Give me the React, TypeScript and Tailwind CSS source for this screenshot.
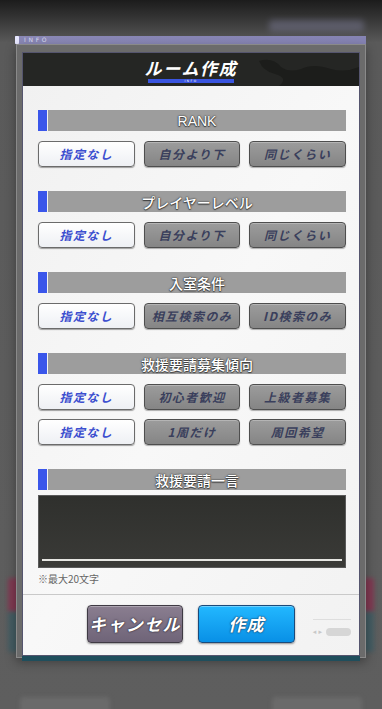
const JP = "font-['Noto_Sans_CJK_JP','Noto_Sans',sans-serif]";

type Opt = { label: string; selected?: boolean };

function OptionButton({ label, selected }: Opt) {
	return (
		<button
			type="button"
			className={
				selected
					? "flex h-[26px] items-center justify-center rounded-[4px] border border-[#6b6b6b] bg-gradient-to-b from-white to-[#eef0f4] text-[12px] font-bold italic tracking-[0.12em] text-[#3c4fcf] shadow-[0_1px_1px_rgba(0,0,0,0.35)]"
					: "flex h-[26px] items-center justify-center rounded-[4px] border border-[#4e4e4e] bg-gradient-to-b from-[#9c9c9c] to-[#858585] text-[12px] font-bold italic tracking-[0.12em] text-[#3a3f5c] shadow-[inset_0_1px_0_rgba(255,255,255,0.25),0_1px_1px_rgba(0,0,0,0.3)]"
			}
		>
			{label}
		</button>
	);
}

function SectionHeader({ title, latin }: { title: string; latin?: boolean }) {
	return (
		<div className="flex h-[21px]">
			<div className="w-[9px] bg-[#3a56ea]" />
			<div className="ml-px flex flex-1 items-center justify-center bg-[#9d9d9d]">
				<span
					className={`text-[14px] font-medium leading-none text-white [text-shadow:0_0_2px_#333,0_0_1px_#333,0_1px_1px_#444] ${latin ? "font-['Liberation_Sans',sans-serif]" : ""}`}
				>
					{title}
				</span>
			</div>
		</div>
	);
}

function OptionRow({ options }: { options: Opt[] }) {
	return (
		<div className="grid grid-cols-3 gap-x-[9px]">
			{options.map((o) => (
				<OptionButton key={o.label} {...o} />
			))}
		</div>
	);
}

export default function App() {
	return (
		<div
			className={`relative h-[709px] w-[382px] overflow-hidden bg-gradient-to-b from-[#1c1c1c] via-[#5a5a5a] via-[6%] to-[#5e5e5e] ${JP}`}
		>
			{/* blurred page behind the modal */}
			<div className="absolute right-[18px] top-[20px] h-[12px] w-[95px] rounded-[4px] bg-[#6e6e84] opacity-60 blur-[3px]" />
			<div className="absolute left-[8px] top-[578px] h-[34px] w-[14px] rounded-[3px] bg-[#8a3150] opacity-80 blur-[2px]" />
			<div className="absolute right-[8px] top-[578px] h-[34px] w-[14px] rounded-[3px] bg-[#8a3150] opacity-80 blur-[2px]" />
			<div className="absolute left-[8px] top-[612px] h-[40px] w-[14px] bg-[#3a5d66] opacity-70 blur-[2px]" />
			<div className="absolute right-[8px] top-[612px] h-[40px] w-[14px] bg-[#3a5d66] opacity-70 blur-[2px]" />
			<div className="absolute bottom-[-6px] left-[20px] h-[18px] w-[90px] rounded-[4px] bg-[#6a6a6a] blur-[2px]" />
			<div className="absolute bottom-[-6px] right-[20px] h-[18px] w-[90px] rounded-[4px] bg-[#6a6a6a] blur-[2px]" />

			<div className="relative flex flex-col pl-[15px] pr-[16px] pt-[36px]">
				{/* INFO tab bar */}
				<div className="flex h-[8px] items-center gap-[5px] bg-gradient-to-r from-[#8a88b6] to-[#8684b4]">
					<div className="h-[8px] w-[4px] rounded-[1px] bg-[#e8e8ff]" />
					<span className="font-['DejaVu_Sans',sans-serif] text-[6px] leading-none tracking-[0.45em] text-[#dcdcf0]">
						INFO
					</span>
				</div>

				{/* frame */}
				<div className="ml-px border border-[#8a8a8a] bg-[#6b6b6b] px-[5px] pb-[1px] pt-[7px] shadow-[0_4px_10px_rgba(0,0,0,0.35)]">
					<div className="flex flex-col border border-[#55556e] shadow-[0_5px_0_#1f4e5c]">
						{/* title */}
						<div className="relative flex h-[33px] flex-col items-center justify-end overflow-hidden bg-[#252624] pb-[3px]">
							<svg className="absolute right-0 top-0" width="140" height="33" viewBox="0 0 140 33">
								<path d="M40 8 q14 -4 22 6 q8 6 20 2 q12 -6 30 0 q14 4 28 -2 L140 33 L60 33 q10 -8 -4 -12 q-12 -3 -16 -13z" fill="#1c1d1b" />
							</svg>
							<span className="relative text-[17px] font-bold italic leading-none tracking-[0.1em] text-white">
								ルーム作成
							</span>
							<div className="relative mt-[3px] flex h-[4px] w-[86px] items-center justify-center bg-[#3a55e0]">
								<span className="font-['DejaVu_Sans',sans-serif] text-[3px] leading-none tracking-[0.5em] text-white">
									INFO
								</span>
							</div>
						</div>

						{/* body */}
						<div className="bg-gradient-to-br from-[#f1f1f1] via-[#f8f8f8] to-[#f2f2f2]">
							<div className="flex flex-col pl-[15px] pr-[13px] pt-[24px]">
								<SectionHeader title="RANK" latin />
								<div className="mt-[10px]">
									<OptionRow
										options={[
											{ label: "指定なし", selected: true },
											{ label: "自分より下" },
											{ label: "同じくらい" },
										]}
									/>
								</div>

								<div className="mt-[24px]">
									<SectionHeader title="プレイヤーレベル" />
								</div>
								<div className="mt-[10px]">
									<OptionRow
										options={[
											{ label: "指定なし", selected: true },
											{ label: "自分より下" },
											{ label: "同じくらい" },
										]}
									/>
								</div>

								<div className="mt-[24px]">
									<SectionHeader title="入室条件" />
								</div>
								<div className="mt-[10px]">
									<OptionRow
										options={[
											{ label: "指定なし", selected: true },
											{ label: "相互検索のみ" },
											{ label: "ID検索のみ" },
										]}
									/>
								</div>

								<div className="mt-[24px]">
									<SectionHeader title="救援要請募集傾向" />
								</div>
								<div className="mt-[10px] flex flex-col gap-[9px]">
									<OptionRow
										options={[
											{ label: "指定なし", selected: true },
											{ label: "初心者歓迎" },
											{ label: "上級者募集" },
										]}
									/>
									<OptionRow
										options={[
											{ label: "指定なし", selected: true },
											{ label: "1周だけ" },
											{ label: "周回希望" },
										]}
									/>
								</div>

								<div className="mt-[24px]">
									<SectionHeader title="救援要請一言" />
								</div>
								<div className="mt-[5px] flex h-[73px] flex-col justify-end border border-[#5a5a5a] bg-gradient-to-b from-[#2f302d] to-[#3a3a37] px-[3px] pb-[6px]">
									<div className="h-[2px] bg-[#e6e6e2]" />
								</div>
								<p className="mt-[4px] text-[10px] leading-[14px] text-[#666]">※最大20文字</p>
							</div>

							{/* footer */}
							<div className="relative mt-[8px] flex h-[61px] items-start justify-center gap-[15px] border-t border-[#c9c9c9] pt-[10px]">
								<button
									type="button"
									className="h-[38px] w-[96px] rounded-[4px] border border-[#3f3a44] bg-gradient-to-b from-[#8a7e90] to-[#6f6478] text-[17px] font-bold italic tracking-[0.08em] text-white shadow-[inset_0_1px_0_rgba(255,255,255,0.3),0_1px_2px_rgba(0,0,0,0.4)] [text-shadow:0_0_2px_#2a2530,0_0_1px_#2a2530]"
								>
									キャンセル
								</button>
								<button
									type="button"
									className="h-[38px] w-[97px] rounded-[4px] border border-[#1b4a7a] bg-gradient-to-b from-[#22b8ff] to-[#0890e6] text-[17px] font-bold italic tracking-[0.08em] text-white shadow-[inset_0_1px_0_rgba(255,255,255,0.35),0_1px_2px_rgba(0,0,0,0.4)] [text-shadow:0_0_2px_#14365a,0_0_1px_#14365a]"
								>
									作成
								</button>
								<div className="absolute right-[8px] top-[24px] h-px w-[38px] bg-[#dedede]" />
								<div className="absolute right-[8px] top-[33px] flex items-center gap-[4px]">
									<span className="font-['DejaVu_Sans',sans-serif] text-[7px] leading-none text-[#c8c8c8]">◂ ▸</span>
									<div className="h-[8px] w-[25px] rounded-full bg-[#d6d6d6]" />
								</div>
							</div>
						</div>
					</div>
				</div>
			</div>
		</div>
	);
}
